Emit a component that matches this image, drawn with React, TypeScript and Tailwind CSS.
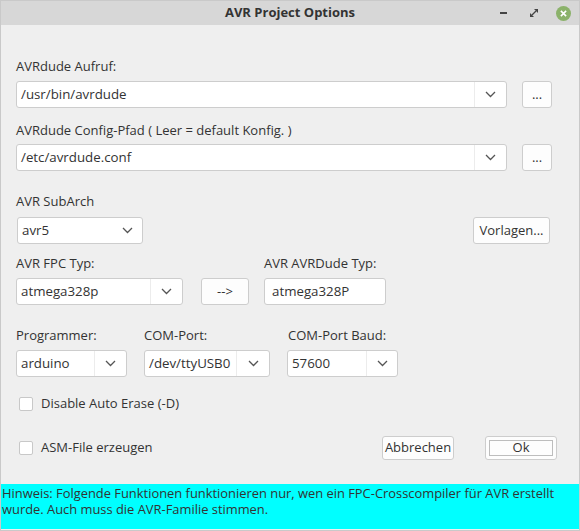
import React from 'react';

const font = { fontFamily: '"Open Sans", "DejaVu Sans", sans-serif' };

const Chevron = () => (
  <svg width="11" height="7" viewBox="0 0 11 7" className="text-[#555]">
    <path d="M1 1l4.5 4.5L10 1" fill="none" stroke="currentColor" strokeWidth="1.3" />
  </svg>
);

const Combo: React.FC<{ value: string; w: string; btnW: string; divider?: boolean }> = ({ value, w, btnW, divider = true }) => (
  <div className={`flex h-[27px] ${w} items-stretch rounded-[3px] border border-[#cdcdcd] bg-white`}>
    <div className="flex flex-1 items-center truncate pl-[4px] text-[13.3px] text-[#333]">{value}</div>
    <div className={`flex ${btnW} items-center justify-center ${divider ? 'border-l border-[#ececec]' : ''}`}>
      <Chevron />
    </div>
  </div>
);

const Button: React.FC<{ children: React.ReactNode; className?: string }> = ({ children, className = '' }) => (
  <div className={`flex items-center justify-center rounded-[3px] border border-[#cdcdcd] bg-[#fdfdfd] text-[13px] text-[#333] ${className}`}>
    {children}
  </div>
);

const Check: React.FC<{ label: string }> = ({ label }) => (
  <div className="flex items-center">
    <div className="ml-[3px] h-[14px] w-[14px] rounded-[2px] border border-[#c8c8c8] bg-white" />
    <span className="ml-[8px] text-[13px] text-[#333]">{label}</span>
  </div>
);

export default function App() {
  return (
    <div className="flex h-[531px] w-[580px] flex-col overflow-hidden border border-[#c9c9c9] bg-[#efefef]" style={font}>
      {/* title bar */}
      <div className="relative flex h-[24px] shrink-0 items-center justify-center bg-[#d7d7d7]">
        <span className="text-[13px] font-bold text-[#333]">AVR Project Options</span>
        <div className="absolute right-[8px] top-0 flex h-full items-center">
          <div className="mr-[23px] h-[2px] w-[7px] bg-[#444]" />
          <svg width="8" height="8" viewBox="0 0 8 8" className="mr-[18px]">
            <path d="M4 0h4v4zM0 4v4h4z" fill="#444" />
            <path d="M2 6l4-4" stroke="#444" strokeWidth="1.2" />
          </svg>
          <div className="flex h-[15px] w-[15px] items-center justify-center rounded-full bg-[#8bb26a]">
            <svg width="7" height="7" viewBox="0 0 8 8">
              <path d="M1 1l6 6M7 1l-6 6" stroke="white" strokeWidth="1.8" />
            </svg>
          </div>
        </div>
      </div>

      <div className="flex flex-1 flex-col pl-[15px] text-[13px] text-[#333]">
        <div className="mt-[32px] h-[18px] leading-[18px]">AVRdude Aufruf:</div>
        <div className="mt-[6px] flex">
          <Combo value="/usr/bin/avrdude" w="w-[491px]" btnW="w-[32px]" />
          <Button className="ml-[15px] h-[27px] w-[30px]">...</Button>
        </div>
        <div className="mt-[13px] h-[18px] leading-[18px]">AVRdude Config-Pfad ( Leer = default Konfig. )</div>
        <div className="mt-[5px] flex">
          <Combo value="/etc/avrdude.conf" w="w-[491px]" btnW="w-[32px]" />
          <Button className="ml-[15px] h-[27px] w-[30px]">...</Button>
        </div>

        <div className="mt-[21px] h-[18px] leading-[18px]">AVR SubArch</div>
        <div className="mt-[7px] flex items-start">
          <div className="ml-[1px]">
            <Combo value="avr5" w="w-[126px]" btnW="w-[30px]" divider={false} />
          </div>
          <Button className="ml-auto mr-[29px] h-[27px] w-[77px]">Vorlagen...</Button>
        </div>

        <div className="mt-[10px] flex h-[18px] leading-[18px]">
          <span className="w-[248px]">AVR FPC Typ:</span>
          <span>AVR AVRDude Typ:</span>
        </div>
        <div className="mt-[6px] flex">
          <Combo value="atmega328p" w="w-[167px]" btnW="w-[32px]" />
          <Button className="ml-[18px] h-[27px] w-[48px]">--&gt;</Button>
          <div className="ml-[15px] flex h-[27px] w-[122px] items-center rounded-[3px] border border-[#cdcdcd] bg-white pl-[7px] text-[13.3px]">
            atmega328P
          </div>
        </div>

        <div className="mt-[21px] flex h-[18px] leading-[18px]">
          <span className="w-[128px]">Programmer:</span>
          <span className="w-[144px]">COM-Port:</span>
          <span>COM-Port Baud:</span>
        </div>
        <div className="mt-[6px] flex">
          <Combo value="arduino" w="w-[111px]" btnW="w-[32px]" />
          <div className="ml-[17px]">
            <Combo value="/dev/ttyUSB0" w="w-[126px]" btnW="w-[33px]" />
          </div>
          <div className="ml-[17px]">
            <Combo value="57600" w="w-[111px]" btnW="w-[31px]" />
          </div>
        </div>

        <div className="mt-[17px]">
          <Check label="Disable Auto Erase (-D)" />
        </div>
        <div className="mt-[22px] flex items-center">
          <Check label="ASM-File erzeugen" />
          <Button className="ml-auto h-[24px] w-[72px]">Abbrechen</Button>
          <div className="ml-[31px] mr-[22px] flex h-[24px] w-[72px] items-center justify-center rounded-[3px] border border-[#cdcdcd] bg-[#fdfdfd] p-[3px]">
            <div className="flex h-full w-full items-center justify-center border border-[#bdbdbd]">Ok</div>
          </div>
        </div>
      </div>

      <div className="mb-[1px] h-[45px] shrink-0 bg-[#00ffff] pl-[1px] pt-[1px] text-[12.9px] leading-[16px] text-[#333]">
        Hinweis: Folgende Funktionen funktionieren nur, wen ein FPC-Crosscompiler für AVR erstellt wurde. Auch muss die AVR-Familie stimmen.
      </div>
    </div>
  );
}
